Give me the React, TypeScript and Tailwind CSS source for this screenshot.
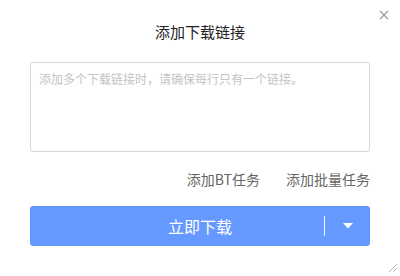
import React from 'react';

const font = { fontFamily: '"Microsoft YaHei", "Noto Sans CJK SC", sans-serif' };

export default function App() {
    return (
        <div className="relative w-[400px] h-[276px] bg-white overflow-hidden" style={font}>
            {/* close */}
            <button className="absolute top-[9px] right-[10px] w-[12px] h-[12px] flex items-center justify-center text-[#9a9a9a]">
                <svg width="10" height="10" viewBox="0 0 10 10" stroke="currentColor" strokeWidth="1.1" fill="none">
                    <path d="M1 1 L9 9 M9 1 L1 9" />
                </svg>
            </button>

            <div className="flex flex-col px-[30px]">
                <h1 className="h-[62px] pt-[22px] text-center text-[15px] leading-[20px] text-[#222]">添加下载链接</h1>

                <div className="h-[90px] border border-[#d6d6d6] rounded-[3px] px-[8px] pt-[7px]">
                    <p className="text-[12px] leading-[18px] text-[#c4c4c4]">添加多个下载链接时，请确保每行只有一个链接。</p>
                </div>

                <div className="flex justify-end gap-[26px] mt-[17px] h-[20px] text-[14px] leading-[20px] text-[#666]">
                    <span>添加BT任务</span>
                    <span>添加批量任务</span>
                </div>

                <div className="mt-[17px] h-[40px] rounded-[3px] bg-[#6699ff] flex items-center text-white">
                    <div className="flex-1 text-center text-[16px] leading-[20px] pl-[46px]">立即下载</div>
                    <div className="w-px h-[20px] bg-white/90" />
                    <div className="w-[45px] flex items-center justify-center">
                        <svg width="10" height="6" viewBox="0 0 10 6" fill="currentColor">
                            <path d="M0 0 H10 L5 5.5 Z" />
                        </svg>
                    </div>
                </div>
            </div>

            {/* resize grip */}
            <svg className="absolute right-[2px] bottom-[3px]" width="12" height="12" viewBox="0 0 12 12" stroke="#b8b8b8" strokeWidth="1">
                <path d="M11 3 L3 11 M11 7 L7 11" />
            </svg>
        </div>
    );
}
